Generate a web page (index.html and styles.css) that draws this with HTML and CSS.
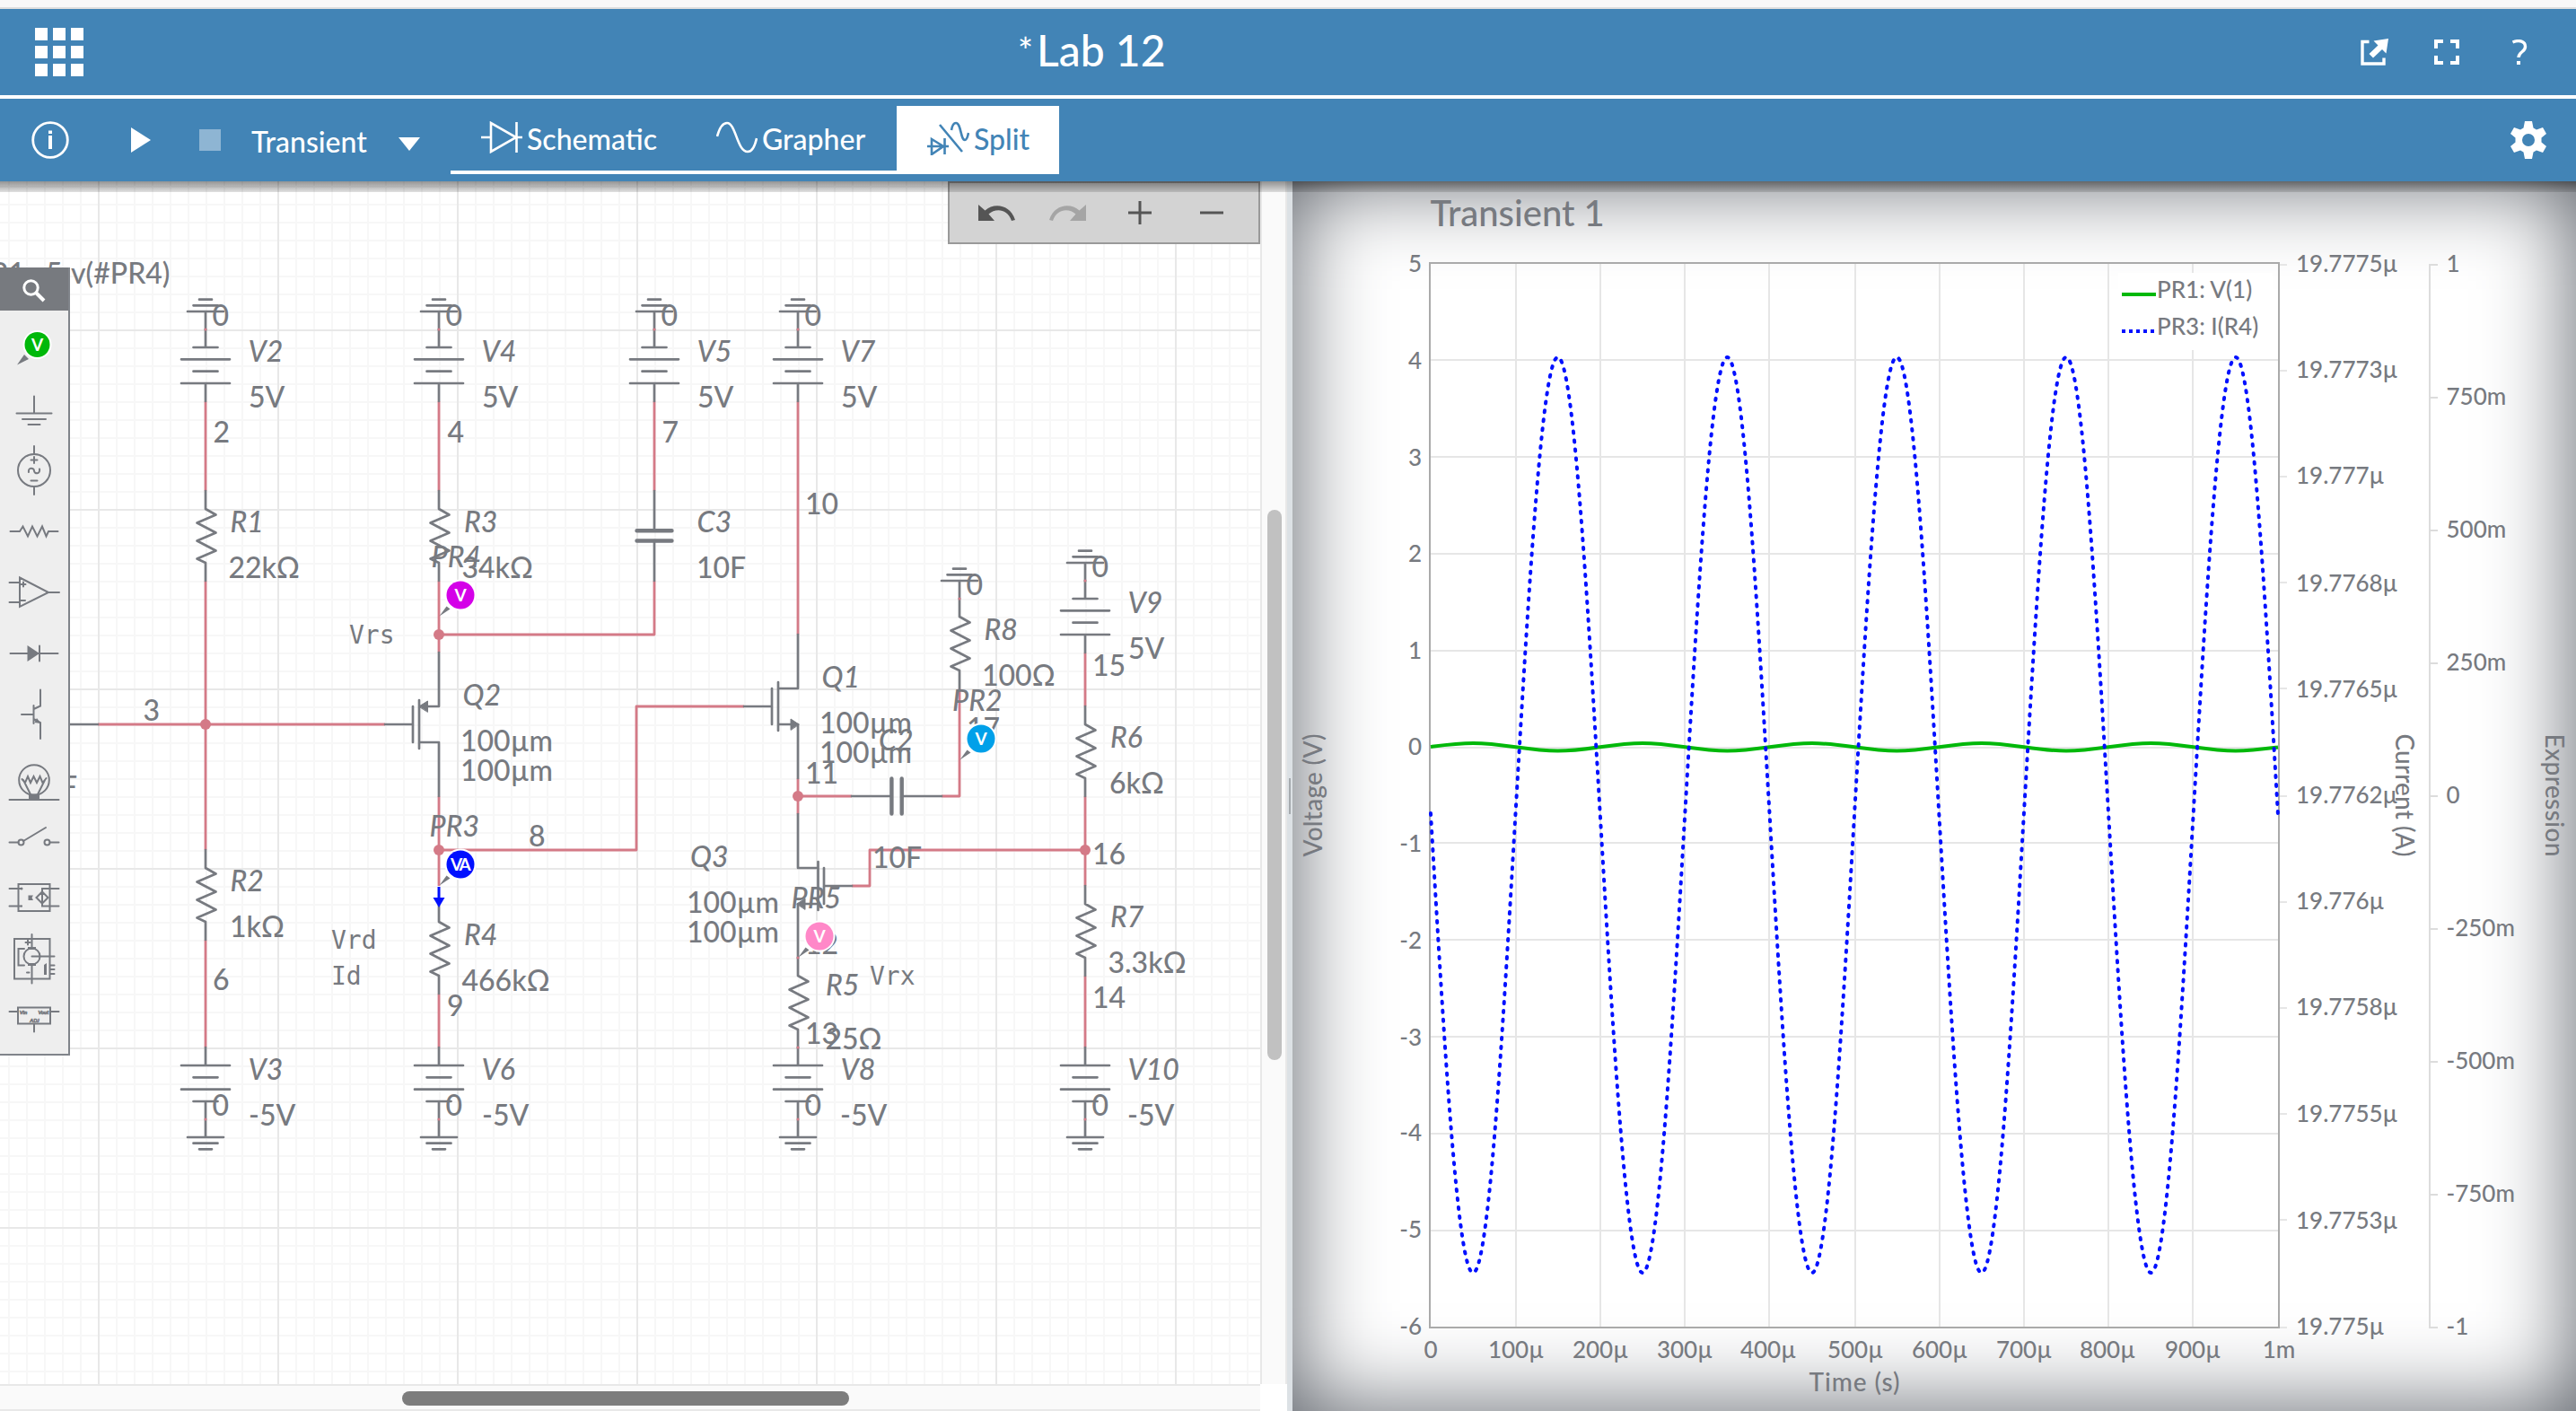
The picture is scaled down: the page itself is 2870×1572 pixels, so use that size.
FILE: index.html
```html
<!DOCTYPE html>
<html lang="en">
<head>
<meta charset="utf-8">
<title>Lab 12</title>
<link rel="stylesheet" href="styles.css">
</head>
<body>
<div class="app">
  <div class="topstrip"></div>
  <header class="titlebar">
    <svg class="apps" viewBox="0 0 54 54"><path d="M0 0h14v14H0zM20 0h14v14H20zM40 0h14v14H40zM0 20h14v14H0zM20 20h14v14H20zM40 20h14v14H40zM0 40h14v14H0zM20 40h14v14H20zM40 40h14v14H40z"/></svg>
    <h1 class="doc-title"><span class="dirty">*</span><span class="doc-name">Lab 12</span></h1>
    <div class="title-actions">
      <svg width="32" height="32" viewBox="0 0 32 32"><path class="outline" d="M9.500 4.500H2V29H26V22.500"/><path class="solid" d="M31 1L28.500 17.500L24 13L14 22.500L9.500 18L19.500 8.500L14.500 3.500Z"/></svg>
      <svg width="28" height="28" viewBox="0 0 28 28"><path class="solid" d="M0 0h10v4H4v6H0zM18 0h10v10h-4V4h-6zM0 18h4v6h6v4H0zM24 18h4v10H18v-4h6z"/></svg>
      <svg width="18" height="28" viewBox="0 0 18 28"><path class="outline" d="M1.500 3C9 0 15.500 2 15.500 8C15.500 14 8 13.500 8 20"/><path class="solid" d="M6 24h4v4H6z"/></svg>
    </div>
  </header>
  <nav class="toolbar">
    <svg class="info" viewBox="0 0 42 42"><circle cx="21" cy="21" r="19.300"/><path class="i" d="M19 16h4v15h-4zM19 10.500h4v3.500h-4z"/></svg>
    <svg class="play" viewBox="0 0 22 28"><path d="M0 0L22 14L0 28Z"/></svg>
    <span class="stop"></span>
    <span class="sim">Transient</span>
    <svg class="caret" viewBox="0 0 24 15"><path d="M0 0H24L12 15Z"/></svg>
    <div class="tabs">
      <div class="tab schematic"><svg width="46" height="36" viewBox="0 0 46 36"><path d="M0 18H11M11 2V34L39 18ZM39.500 1V35M39 18H46"/></svg><span>Schematic</span></div>
      <div class="tab grapher"><svg width="46" height="36" viewBox="0 0 46 36"><path d="M1 17C4 6 8 2 12 2C22 2 23 34 35 34C40 34 43 28 45 19"/></svg><span>Grapher</span></div>
      <div class="tab split active"><svg width="47" height="38" viewBox="0 0 47 38"><path d="M0 28H24M5 20V37L18 28ZM19.500 19V37M14 4L39 34M27 10C28 4 30 2 32 2C38 2 37 21 42 21C44 21 45 18 46 13"/></svg><span>Split</span></div>
    </div>
    <svg class="gear" viewBox="-21 -21 42 42"><path d="M-4-21H4L5.500-13.500L9-11.500L16-14L20-7L14.500-2.500V2.500L20 7L16 14L9 11.500L5.500 13.500L4 21H-4L-5.500 13.500L-9 11.500L-16 14L-20 7L-14.500 2.500V-2.500L-20-7L-16-14L-9-11.500L-5.500-13.500ZM7 0A7 7 0 1 0-7 0A7 7 0 1 0 7 0Z"/></svg>
  </nav>
  <main class="workspace">
    <section class="editor">
      <svg class="canvas" viewBox="0 202 1404 1340">
        <defs>
          <pattern id="minor" x="9" y="7" width="20" height="20" patternUnits="userSpaceOnUse"><path class="g1" d="M0 0h20v2H0zM0 0h2v20H0z"/></pattern>
          <pattern id="major" x="109" y="167" width="200" height="200" patternUnits="userSpaceOnUse"><path class="g2" d="M0 0h200v2H0zM0 0h2v200H0z"/></pattern>
          <g id="gnd"><path d="M0 0V20M-20 20H20M-13.500 26.700H13.500M-7 33.300H7"/></g>
          <g id="bat"><path d="M0 0V20M-13.500 20H13.500M-27 33.300H27M-13.500 46.700H13.500M-27 60H27M0 60V80"/></g>
          <g id="supply"><path d="M0 0V-20M-20-20H20M-13.500-26.700H13.500M-7-33.300H7"/><use href="#bat"/></g>
          <g id="neg"><path d="M0 0V20M-27 20H27M-13.500 33.300H13.500M-27 46.700H27M-13.500 60H13.500M0 60V100M-20 100H20M-13.500 106.700H13.500M-7 113.300H7"/></g>
          <g id="res"><path d="M0 0V20L11.500 26.500L-9.500 35.500L11.500 46.500L-9.500 55.500L11.500 66.500L-9.500 75.500L0 80V100"/></g>
          <g id="probe"><path class="stem" d="M0 0L8-11L12-8Z"/><circle class="ring" cx="23.500" cy="-23.500" r="17.500"/><circle cx="23.500" cy="-23.500" r="15.500"/></g>
        </defs>
        <rect y="202" width="1404" height="1340" fill="url(#minor)"/>
        <rect y="202" width="1404" height="1340" fill="url(#major)"/>

        <g class="wire">
          <path d="M229 447V547M229 647V947M229 1047V1167M109 807H429"/>
          <path d="M489 447V547M489 647V727M489 707H729V647M729 447V547"/>
          <path d="M489 887V987M489 947H709V787H829M489 1107V1167"/>
          <path d="M889 447V707M889 867V907M889 887H949M1049 887H1069V767"/>
          <path d="M949 987H969V947H1209M1209 727V787M1209 887V987M1209 1087V1167"/>
        </g>
        <g class="part">
          <use href="#supply" x="229" y="367"/><use href="#supply" x="489" y="367"/><use href="#supply" x="729" y="367"/><use href="#supply" x="889" y="367"/><use href="#supply" x="1209" y="647"/>
          <use href="#neg" x="229" y="1167"/><use href="#neg" x="489" y="1167"/><use href="#neg" x="889" y="1167"/><use href="#neg" x="1209" y="1167"/>
          <use href="#res" x="229" y="547"/><use href="#res" x="229" y="947"/><use href="#res" x="489" y="547"/><use href="#res" x="489" y="1007"/><use href="#res" x="889" y="1067"/><use href="#res" x="1069" y="667"/><use href="#res" x="1209" y="787"/><use href="#res" x="1209" y="987"/>
          <use href="#gnd" transform="translate(1069 667) scale(1 -1)"/>
          <path d="M60 807H109M729 547V591M729 602V647M949 887H993M1005 887H1049"/>
          <path d="M429 807H460M460 787V827M467 780V834M467 787H489V727M467 827H489V887"/>
          <path d="M829 787H860M860 767V807M867 760V814M867 767H889V707M867 807H889V867"/>
          <path d="M949 987H918M918 967V1007M911.500 960V1014M911.500 967H889V907M911.500 1007H889V1067"/>
          <path class="plate" d="M709.500 591.300H748.500M709.500 602.500H748.500M993.400 867.500V906.500M1004.700 867.500V906.500"/>
          <path class="arrow" d="M467 787L476.500 781V793ZM890 807L881 801V813ZM888 1007L897 1001V1013Z"/>
        </g>
        <g class="node">
          <circle cx="229" cy="807" r="6"/><circle cx="489" cy="707" r="6"/><circle cx="489" cy="947" r="6"/><circle cx="889" cy="887" r="6"/><circle cx="1209" cy="947" r="6"/>
          <circle cx="229" cy="367" r="1.500"/><circle cx="489" cy="367" r="1.500"/><circle cx="729" cy="367" r="1.500"/><circle cx="889" cy="367" r="1.500"/><circle cx="1209" cy="647" r="1.500"/><circle cx="1069" cy="667" r="1.500"/><circle cx="889" cy="1067" r="1.500"/><circle cx="889" cy="1167" r="1.500"/>
          <circle cx="229" cy="1247" r="1.500"/><circle cx="489" cy="1247" r="1.500"/><circle cx="889" cy="1247" r="1.500"/><circle cx="1209" cy="1247" r="1.500"/>
        </g>
        <g class="value">
          <text x="28" y="315.500" text-anchor="end">PR1</text><text x="51" y="315.500">5</text><text x="79" y="315.500">v(#PR4)</text><text x="86" y="887.500" text-anchor="end">10F</text>
          <text x="236.500" y="362.500">0</text><text x="496.500" y="362.500">0</text><text x="736.500" y="362.500">0</text><text x="896.500" y="362.500">0</text><text x="1216.500" y="642.500">0</text><text x="1076.500" y="662.500">0</text>
          <text x="236.500" y="1242.500">0</text><text x="496.500" y="1242.500">0</text><text x="896.500" y="1242.500">0</text><text x="1216.500" y="1242.500">0</text>
          <text x="277" y="453.500">5V</text><text x="537" y="453.500">5V</text><text x="777" y="453.500">5V</text><text x="937" y="453.500">5V</text><text x="1257" y="733.500">5V</text>
          <text x="277" y="1253.500">-5V</text><text x="537" y="1253.500">-5V</text><text x="936" y="1253.500">-5V</text><text x="1256" y="1253.500">-5V</text>
          <text x="237.500" y="492.500">2</text><text x="498.500" y="492.500">4</text><text x="737.500" y="492.500">7</text><text x="897" y="572.500">10</text><text x="159.500" y="802.500">3</text><text x="237" y="1102.500">6</text><text x="498" y="1132">9</text><text x="589" y="942.500">8</text>
          <text x="897" y="872.500">11</text><text x="897" y="1062.500">12</text><text x="897" y="1162.500">13</text><text x="1217" y="752.500">15</text><text x="1217" y="962.500">16</text><text x="1217" y="1122.500">14</text><text x="1077" y="822.500">17</text>
          <text x="254.500" y="643.500">22kΩ</text><text x="256" y="1043.500">1kΩ</text><text x="514.500" y="643.500">34kΩ</text><text x="514.500" y="1103.500">466kΩ</text><text x="776" y="643.500">10F</text><text x="972" y="966.500">10F</text>
          <text x="919.500" y="1168.500">25Ω</text><text x="1094" y="763.500">100Ω</text><text x="1236" y="883.500">6kΩ</text><text x="1234.500" y="1083.500">3.3kΩ</text>
          <text x="513" y="836.500">100µm</text><text x="513" y="870">100µm</text><text x="913" y="816.500">100µm</text><text x="913" y="850">100µm</text><text x="765" y="1016.500">100µm</text><text x="765" y="1050">100µm</text>
        </g>
        <g class="value name">
          <text x="276.500" y="403">V2</text><text x="536.500" y="403">V4</text><text x="776.500" y="403">V5</text><text x="936.500" y="403">V7</text><text x="1256.500" y="683">V9</text>
          <text x="276.500" y="1203">V3</text><text x="536.500" y="1203">V6</text><text x="936.500" y="1203">V8</text><text x="1256.500" y="1203">V10</text>
          <text x="256.500" y="593">R1</text><text x="256.500" y="993">R2</text><text x="517" y="593">R3</text><text x="517" y="1053">R4</text><text x="920" y="1109">R5</text><text x="1237" y="833">R6</text><text x="1237" y="1033">R7</text><text x="1096.500" y="713">R8</text>
          <text x="776.500" y="593">C3</text><text x="979" y="835.500">C2</text><text x="515.500" y="785.500">Q2</text><text x="915.500" y="765.500">Q1</text><text x="769" y="965.500">Q3</text>
          <text x="480.500" y="631.500">PR4</text><text x="478.500" y="931.500">PR3</text><text x="1061" y="791.500">PR2</text><text x="881.500" y="1011.500">PR5</text>
        </g>
        <g class="note"><text x="389" y="716.500">Vrs</text><text x="369" y="1056.500">Vrd</text><text x="369" y="1096.500">Id</text><text x="969" y="1096.500">Vrx</text></g>
        <g class="probes">
          <g fill="#d400e8"><use href="#probe" x="489.500" y="686.500"/></g><text x="513" y="670">V</text>
          <path class="flow" d="M489 988V1002"/><path fill="#0010ff" d="M482.500 1000H495.500L489 1011Z"/>
          <g fill="#0010ff"><use href="#probe" x="489.500" y="986.500"/></g><text x="508.500" y="970">V</text><text x="518" y="970">A</text>
          <g fill="#00a0e9"><use href="#probe" x="1069.500" y="846.500"/></g><text x="1093" y="829.500">V</text>
          <g fill="#ff88c8"><use href="#probe" x="889.500" y="1066.500"/></g><text x="913" y="1050">V</text>
        </g>
      </svg>

      <div class="palette">
        <div class="palette-search"><svg width="26" height="26" viewBox="0 0 26 26"><circle cx="9.500" cy="9.500" r="7.700"/><path d="M15 15L24 24" class="handle"/></svg></div>
        <svg class="parts" viewBox="0 346 76 828">
          <path class="fill" d="M19 406.500L27 395L32 400Z"/><circle cx="41.500" cy="384" r="16" fill="#fff" stroke="none"/><circle cx="41.500" cy="384" r="14" fill="#00b80a" stroke="none"/><text x="41.500" y="391" class="pv">V</text>
          <path d="M38 441.500V460.500M18.500 460.500H57.500M25 467H51M31.500 473H44.500"/>
          <circle cx="38" cy="524" r="18"/><path d="M38 497V506M38 542V551M34.500 512.500H41.500M38 509V516M34.500 535.500H41.500M32 526C31 520 38 521 38 524.500C38 528 45 529 44 522.500"/>
          <path d="M11.500 592H22L25.500 586.500L31 597.500L36 586.500L41.500 597.500L47 586.500L51.500 597.500L54 592H64.500"/>
          <path d="M22 643.500V676L54 660ZM10.500 649H22M10.500 671H22M54 660H66M23.500 651H28.500M26 648.500V653.500M23 669H28"/>
          <path d="M11.500 728H64.500M44 719.500V736.500"/><path class="fill" d="M30.500 719L44 728L30.500 737Z"/>
          <path d="M24 796H37M37.500 786V806M37.500 790L45 786.500V768.500M37.500 801L45 805V823"/><path class="fill" d="M38.500 805L41 800L45.500 806Z"/>
          <circle cx="38" cy="869" r="16.800"/><path d="M10.500 891H65.500M24.500 868L28 872L31 865L34 872L37.500 865L41 872L44.500 865L47.500 872L51.500 867M26 869L34 885M50 869L42 885"/><path class="fill" d="M32 884.500H44V891H32Z"/>
          <path d="M10.500 938.500H20.500M26 937L51 922M55.500 938.500H65.500"/><circle cx="23.500" cy="938.500" r="3"/><circle cx="52.500" cy="938.500" r="3"/>
          <path d="M20.500 985H55.500V1015H20.500ZM10.500 990H24M10.500 1009.500H24M65.500 990H47V1009.500H65.500"/><path d="M47 993.500L53.500 1000L47 1006.500L40.500 1000Z"/><path class="fill" d="M43 997H51L47 993ZM31.500 997.500H37L35.500 1000L37 1003H31.500Z"/><circle class="fill" cx="24" cy="990" r="1.500"/><circle class="fill" cx="24" cy="1009.500" r="1"/>
          <path d="M16 1046H55.500V1090.500H16ZM35.500 1041V1056M35.500 1075V1095.500M35.500 1065.500H60.500M27 1057H20.500V1075.500H27M55.500 1075.500H60.500M55.500 1080H60.500M55.500 1085H60.500M28.500 1050H33.500M31 1047.500V1052.500M30 1083.500H32.500"/><circle cx="35.500" cy="1065.500" r="9"/><path class="fill" d="M31 1055H40V1058H31ZM31 1073H40V1076H31ZM49 1075L52 1073V1086H49Z"/>
          <path d="M20 1122.500H56V1140.500H20ZM10.500 1127H20M56 1127H65.500M38 1140.500V1149.500"/><text x="26" y="1129.500" class="tiny">Vin</text><text x="48.500" y="1129.500" class="tiny">Vout</text><text x="38.500" y="1138.500" class="tiny">ADJ</text>
        </svg>
      </div>

      <div class="zoombar">
        <svg width="42" height="18" viewBox="0 0 42 18"><path class="ink" d="M0 0V18H18L11.500 10.500C19 4 32 4 37 18L41 17C35-1 17-2 7.500 6.500Z"/></svg>
        <svg class="off" width="42" height="18" viewBox="0 0 42 18"><path class="ink" d="M41 0V18H23L29.500 10.500C22 4 9 4 4 18L0 17C6-1 24-2 33.500 6.500Z"/></svg>
        <svg width="26" height="26" viewBox="0 0 26 26"><path class="ink" d="M0 11.500h11.500V0h3v11.500H26v3H14.500V26h-3V14.500H0z"/></svg>
        <svg width="26" height="26" viewBox="0 0 26 26"><path class="ink" d="M0 11.500h26v3H0z"/></svg>
      </div>
      <div class="vscroll"><div class="vthumb"></div></div>
      <div class="hscroll"><div class="hthumb"></div></div>
      <div class="corner"></div>
    </section>
    <div class="divider"><span class="grip"></span></div>
    <section class="graph">
      <svg class="plot" viewBox="1440 202 1430 1370">
        <text class="title" x="1593.500" y="251.500">Transient 1</text>
        <path class="grid" d="M1689 293V1479M1783 293V1479M1877 293V1479M1971 293V1479M2067 293V1479M2161 293V1479M2255 293V1479M2349 293V1479M2443 293V1479M1594 401H2538M1594 509H2538M1594 617H2538M1594 725H2538M1594 833H2538M1594 939H2538M1594 1047H2538M1594 1155H2538M1594 1263H2538M1594 1371H2538"/>
        <path class="grid" d="M2540 295H2548M2540 413H2548M2540 531H2548M2540 649H2548M2540 767H2548M2540 887H2548M2540 1005H2548M2540 1123H2548M2540 1241H2548M2540 1359H2548M2540 1479H2548"/>
        <path class="axis2" d="M2716 295H2707V1479H2716M2707 443H2716M2707 591H2716M2707 739H2716M2707 887H2716M2707 1035H2716M2707 1183H2716M2707 1331H2716"/>
        <rect class="frame" x="1593" y="293" width="946" height="1186"/>
        <path class="green" d="M1594 832C1609.400 830 1624.100 828 1641.200 828C1675.600 828 1701.200 836.500 1735.600 836.500S1795.600 828 1830 828S1890 836.500 1924.400 836.500S1984.400 828 2018.800 828S2078.800 836.500 2113.200 836.500S2173.200 828 2207.600 828S2267.600 836.500 2302 836.500S2362 828 2396.400 828S2456.400 836.500 2490.800 836.500C2508 836.500 2522.500 834.500 2538 832.500"/>
        <path class="blue" d="M1594 906C1609.400 1169.300 1624.100 1418 1641.200 1418C1675.600 1418 1701.200 398 1735.600 398S1795.600 1418 1830 1418S1890 398 1924.400 398S1984.400 1418 2018.800 1418S2078.800 398 2113.200 398S2173.200 1418 2207.600 1418S2267.600 398 2302 398S2362 1418 2396.400 1418S2456.400 398 2490.800 398C2508 398 2522.600 646.700 2538 908"/>
        <rect class="legend" x="2360" y="304" width="172" height="86"/>
        <path class="green" d="M2364 328H2402"/><path class="blue key" d="M2364 369H2401"/>
        <g class="lbl">
          <text x="2403" y="332">PR1: V(1)</text><text x="2403" y="373">PR3: I(R4)</text>
          <g text-anchor="end"><text x="1584" y="302.500">5</text><text x="1584" y="410.500">4</text><text x="1584" y="518.500">3</text><text x="1584" y="625.500">2</text><text x="1584" y="733.500">1</text><text x="1584" y="841">0</text><text x="1584" y="949">-1</text><text x="1584" y="1057">-2</text><text x="1584" y="1164.500">-3</text><text x="1584" y="1271">-4</text><text x="1584" y="1379">-5</text><text x="1584" y="1487">-6</text></g>
          <g><text x="2558" y="303">19.7775µ</text><text x="2558" y="421">19.7773µ</text><text x="2558" y="539">19.777µ</text><text x="2558" y="659">19.7768µ</text><text x="2558" y="777">19.7765µ</text><text x="2558" y="895">19.7762µ</text><text x="2558" y="1013">19.776µ</text><text x="2558" y="1131">19.7758µ</text><text x="2558" y="1250">19.7755µ</text><text x="2558" y="1369">19.7753µ</text><text x="2558" y="1487">19.775µ</text></g>
          <g><text x="2725.500" y="303">1</text><text x="2725.500" y="451">750m</text><text x="2725.500" y="599">500m</text><text x="2725.500" y="747">250m</text><text x="2725.500" y="895">0</text><text x="2725.500" y="1043">-250m</text><text x="2725.500" y="1191">-500m</text><text x="2725.500" y="1339">-750m</text><text x="2725.500" y="1487">-1</text></g>
          <g text-anchor="middle"><text x="1594" y="1512.500">0</text><text x="1689" y="1512.500">100µ</text><text x="1783" y="1512.500">200µ</text><text x="1877" y="1512.500">300µ</text><text x="1970" y="1512.500">400µ</text><text x="2067" y="1512.500">500µ</text><text x="2161" y="1512.500">600µ</text><text x="2255" y="1512.500">700µ</text><text x="2348" y="1512.500">800µ</text><text x="2443" y="1512.500">900µ</text><text x="2539" y="1512.500">1m</text></g>
          <g text-anchor="middle" class="axis-name"><text x="2066" y="1550" textLength="101">Time (s)</text><text transform="translate(1472.500 886) rotate(-90)" textLength="137">Voltage (V)</text><text transform="translate(2669 886) rotate(90)" textLength="137">Current (A)</text><text transform="translate(2836 886) rotate(90)" textLength="137">Expression</text></g>
        </g>
      </svg>
    </section>
  </main>
</div>
</body>
</html>
```
FILE: styles.css
```css
* { box-sizing: border-box; }
body { margin: 0; font-family: Lato, "Open Sans", sans-serif; font-weight: 500; background: #fff; }
svg { display: block; flex: none; }
.app { width: 2870px; height: 1572px; overflow: hidden; display: flex; flex-direction: column; }
.topstrip { height: 10px; flex: none; background: #f8f8f8; border-bottom: 2px solid #dedede; }

.titlebar { height: 96px; flex: none; background: #4284b6; color: #fff; display: flex; align-items: center; padding: 0 54px 0 39px; }
.apps { width: 54px; height: 54px; fill: #fff; }
.doc-title { margin: -5px 0 0 1041px; display: flex; font-weight: 500; line-height: 58px; height: 58px; }
.dirty { font-size: 40px; width: 21px; }
.doc-name { font-size: 48px; white-space: nowrap; }
.title-actions { margin-left: auto; display: flex; align-items: center; gap: 50px; }
.title-actions svg:nth-child(2) { margin-right: 8px; }
.outline { fill: none; stroke: #fff; stroke-width: 3.4; }
.solid { fill: #fff; }

.toolbar { position: relative; z-index: 5; height: 96px; flex: none; background: #4284b6; border-top: 4px solid #fff; color: #fff; display: flex; align-items: center; font-size: 32px; }
.toolbar::after { content: ""; position: absolute; left: 0; right: 0; top: 100%; height: 12px; background: linear-gradient(rgba(0,0,0,.42), rgba(0,0,0,.12)); }
.info { width: 42px; height: 42px; margin-left: 35px; fill: none; stroke: #fff; stroke-width: 2.8; }
.i { fill: #fff; stroke: none; }
.play { width: 22px; height: 28px; margin-left: 69px; fill: #fff; }
.stop { width: 24px; height: 24px; margin-left: 54px; background: #8eb5d3; }
.sim { margin-left: 34px; width: 163px; margin-top: 2px; }
.caret { width: 24px; height: 15px; fill: #fff; margin-top: 8px; margin-left: 1px; }
.tabs { margin-left: 34px; height: 76px; display: flex; }
.tab { display: flex; align-items: center; border-bottom: 4px solid #fff; height: 76px; }
.tab svg { fill: none; stroke: currentColor; stroke-width: 2.6; margin-bottom: 3px; }
.tab span { margin-left: 5px; }
.schematic { width: 262px; padding-left: 34px; }
.grapher { width: 235px; padding-left: 34px; }
.split { width: 181px; padding-left: 34px; background: #fff; color: #4284b6; }
.split svg { margin-bottom: 0; }
.gear { width: 42px; height: 42px; margin-left: auto; margin-right: 32px; fill: #fff; fill-rule: evenodd; }

.workspace { flex: 1; min-height: 0; display: flex; }
.editor { position: relative; width: 1434px; display: grid; grid-template: 1340px 30px / 1404px 30px; }
.canvas { width: 1404px; height: 1340px; }
.g1 { fill: #f7f7f7; }
.g2 { fill: #e8e8e8; }
.wire { fill: none; stroke: #d47a87; stroke-width: 2.8; stroke-linejoin: round; }
.part { fill: none; stroke: #777a80; stroke-width: 2.7; stroke-linecap: round; stroke-linejoin: round; }
.plate { stroke-width: 4.4; }
.arrow { fill: #777a80; stroke-width: 1; }
.node { fill: #d47a87; }
.value { font: 500 32px Lato, sans-serif; fill: #777a80; }
.name { font-style: italic; }
.note { font: 28px "DejaVu Sans Mono", monospace; fill: #777a80; }
.probes text { font: bold 19px Lato, sans-serif; fill: #fff; text-anchor: middle; }
.stem { fill: #777a80; }
.ring { fill: #fff; }
.flow { stroke: #0010ff; stroke-width: 3; }

.palette { position: absolute; left: 0; top: 96px; width: 78px; height: 878px; background: #eee; border: solid #80848a; border-width: 0 2px 2px 0; }
.palette-search { height: 48px; background: #777a7f; display: flex; align-items: center; padding-left: 25px; }
.palette-search svg { fill: none; stroke: #fff; stroke-width: 3; margin-top: 4px; }
.handle { stroke-width: 4; }
.parts { width: 76px; height: 828px; fill: none; stroke: #777a80; stroke-width: 2; stroke-linecap: round; }
.fill { fill: #777a80; stroke: none; }
.pv { font: bold 19px Lato, sans-serif; fill: #fff; stroke: none; text-anchor: middle; }
.tiny { font: italic bold 6px Lato, sans-serif; fill: #777a80; stroke: #777a80; stroke-width: .6; text-anchor: middle; }

.zoombar { position: absolute; left: 1056px; top: 0; width: 348px; height: 70px; background: #d3d3d3; border: 2px solid #999; display: flex; align-items: center; padding-left: 32px; }
.ink { fill: #555; }
.zoombar svg:nth-child(2) { margin-left: 37px; }
.zoombar svg:nth-child(3) { margin-left: 46px; }
.zoombar svg:nth-child(4) { margin-left: 54px; }
.off .ink { fill: #a5a5a5; }
.vscroll { background: #fafafa; border: solid #e8e8e8; border-width: 0 2px; padding: 366px 4px 0 6px; }
.vthumb { width: 16px; height: 613px; border-radius: 8px; background: #c1c1c1; }
.hscroll { background: #fafafa; border: solid #e8e8e8; border-width: 2px 0; padding: 6px 0 0 448px; }
.hthumb { width: 498px; height: 16px; border-radius: 8px; background: #7d7d7d; }
.corner { background: #fff; }

.divider { width: 6px; background: #dce1e5; display: flex; align-items: center; justify-content: center; }
.grip { width: 2px; height: 40px; background: #a5aaae; }
.graph { width: 1430px; background: #fff; box-shadow: inset 0 0 100px #5a5f67; }
.plot { width: 1430px; height: 1370px; }
.title { font: 500 40px Lato, sans-serif; fill: #777a80; }
.grid { fill: none; stroke: #e6e6e6; stroke-width: 2; }
.axis2 { fill: none; stroke: #dcdcdc; stroke-width: 2; }
.frame { fill: none; stroke: #aaa; stroke-width: 2; }
.green { fill: none; stroke: #00b80a; stroke-width: 4; }
.blue { fill: none; stroke: #0010ff; stroke-width: 4; stroke-linecap: round; stroke-dasharray: 2 8; }
.key { stroke-linecap: butt; stroke-dasharray: 4 4; }
.legend { fill: #fff; }
.lbl { font: 500 26px Lato, sans-serif; fill: #777a80; }
.axis-name { font-size: 28px; }
```
